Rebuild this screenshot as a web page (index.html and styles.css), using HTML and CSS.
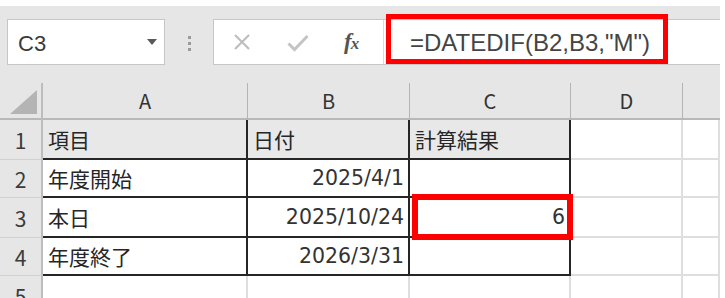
FILE: index.html
```html
<!DOCTYPE html>
<html lang="ja">
<head>
    <meta charset="UTF-8">
    <meta name="viewport" content="width=device-width, initial-scale=1.0">
    <title>DATEDIF</title>
    <link rel="stylesheet" href="styles.css">
</head>
<body>
    <div class="excel">
        <div class="toolbar">
            <div class="namebox">
                <span class="name">C3</span>
                <svg class="arrow" width="10" height="6" viewBox="0 0 10 6"><path d="M0 0H10L5 6Z" fill="#595959"/></svg>
            </div>
            <div class="grip">
                <span></span><span></span><span></span>
            </div>
            <div class="formula">
                <div class="fbtns">
                    <svg class="ico-x" width="18" height="16" viewBox="0 0 18 16"><path d="M2 1L16 15M16 1L2 15" stroke="#bcbcbc" stroke-width="2"/></svg>
                    <svg class="ico-ok" width="22" height="18" viewBox="0 0 22 18"><path d="M1.5 9.5L7.5 15.5L20.5 2" fill="none" stroke="#c4c4c4" stroke-width="3"/></svg>
                    <span class="ico-fx">f<small>x</small></span>
                </div>
                <div class="finput">
                    <span class="ftext">=DATEDIF(B2,B3,"M")</span>
                    <span class="mark mark-formula"></span>
                </div>
            </div>
        </div>

        <div class="sheet">
            <div class="corner">
                <svg width="27" height="24" viewBox="0 0 27 24"><path d="M27 0V24H0Z" fill="#b4b4b4"/></svg>
            </div>
            <div class="colhead">A</div>
            <div class="colhead">B</div>
            <div class="colhead">C</div>
            <div class="colhead">D</div>
            <div class="colhead last"></div>

            <div class="rowhead">1</div>
            <div class="cell tbl head">項目</div>
            <div class="cell tbl head">日付</div>
            <div class="cell tbl head">計算結果</div>
            <div class="cell"></div>
            <div class="cell"></div>

            <div class="rowhead">2</div>
            <div class="cell tbl">年度開始</div>
            <div class="cell tbl num">2025/4/1</div>
            <div class="cell tbl"></div>
            <div class="cell"></div>
            <div class="cell"></div>

            <div class="rowhead">3</div>
            <div class="cell tbl">本日</div>
            <div class="cell tbl num">2025/10/24</div>
            <div class="cell tbl num result">6<span class="mark mark-cell"></span></div>
            <div class="cell"></div>
            <div class="cell"></div>

            <div class="rowhead">4</div>
            <div class="cell tbl">年度終了</div>
            <div class="cell tbl num">2026/3/31</div>
            <div class="cell tbl"></div>
            <div class="cell"></div>
            <div class="cell"></div>

            <div class="rowhead">5</div>
            <div class="cell"></div>
            <div class="cell"></div>
            <div class="cell"></div>
            <div class="cell"></div>
            <div class="cell"></div>
        </div>
    </div>
</body>
</html>
```

FILE: styles.css
```css
body {
    margin: 0;
    background-color: #ffffff;
    overflow: hidden;
    font-family: "Noto Sans CJK JP", "Liberation Sans", sans-serif;
    color: #262626;
}

.excel {
    margin: 6px 5px 0 0;
    height: 292px;
    overflow: hidden;
}

/* formula bar */

.toolbar {
    height: 77px;
    box-sizing: border-box;
    padding: 13px 0 0 7px;
    background-color: #e6e6e6;
    display: flex;
    align-items: flex-start;
}

.namebox {
    width: 158px;
    height: 46px;
    box-sizing: border-box;
    background-color: #ffffff;
    border: 1px solid #c6c6c6;
    display: flex;
    align-items: center;
    justify-content: space-between;
    padding: 0 7px 0 10px;
}

.name {
    font-family: "Liberation Sans", sans-serif;
    font-size: 22px;
    color: #3a3a3a;
    padding-top: 3px;
}

.grip {
    width: 48px;
    height: 46px;
    display: flex;
    flex-direction: column;
    align-items: center;
    justify-content: center;
    gap: 3px;
    padding-top: 2px;
    box-sizing: border-box;
}

.grip span {
    width: 3px;
    height: 3px;
    background-color: #9a9a9a;
}

.formula {
    flex: 1;
    height: 46px;
    box-sizing: border-box;
    background-color: #ffffff;
    border: 1px solid #c6c6c6;
    border-right: none;
    display: flex;
}

.fbtns {
    width: 169px;
    display: flex;
    align-items: center;
    border-right: 1px solid #dadada;
}

.ico-x {
    margin-left: 19px;
}

.ico-ok {
    margin-left: 36px;
    margin-top: 2px;
}

.ico-fx {
    margin-left: 35px;
    font-family: "Liberation Serif", serif;
    font-style: italic;
    font-weight: bold;
    font-size: 23px;
    color: #555555;
    letter-spacing: -1px;
}

.ico-fx small {
    font-size: 17px;
}

.finput {
    flex: 1;
    position: relative;
    display: flex;
    align-items: center;
    padding-left: 26px;
}

.ftext {
    font-family: "Liberation Sans", sans-serif;
    font-size: 24px;
    color: #444444;
    padding-top: 2px;
}

.mark {
    position: absolute;
    box-sizing: border-box;
    border: 6px solid #ff0000;
}

.mark-formula {
    left: 2px;
    top: -6px;
    width: 282px;
    height: 50px;
    border-width: 5px;
}

/* sheet */

.sheet {
    display: grid;
    grid-template-columns: 43px 205px 162px 161px 112px 1fr;
    grid-template-rows: 37px 40px 38px 40px 38px 40px;
}

.corner {
    background-color: #e6e6e6;
    border-right: 2px solid #bdbdbd;
    border-bottom: 2px solid #b8b8b8;
    display: flex;
    align-items: flex-end;
    justify-content: flex-end;
    padding: 0 4px 4px 0;
}

.colhead {
    background-color: #e6e6e6;
    border-right: 1px solid #b4b4b4;
    border-bottom: 2px solid #b8b8b8;
    display: flex;
    align-items: center;
    justify-content: center;
    font-size: 20px;
    color: #333333;
}

.colhead.last {
    border-right: none;
}

.rowhead {
    background-color: #e6e6e6;
    border-right: 2px solid #bdbdbd;
    border-bottom: 1px solid #d0d0d0;
    display: flex;
    align-items: center;
    justify-content: center;
    font-size: 21px;
    color: #3a3a3a;
}

.cell {
    border-right: 2px solid #dedede;
    border-bottom: 2px solid #dedede;
    display: flex;
    align-items: center;
    padding: 0 4px 0 5px;
    font-size: 21px;
    white-space: nowrap;
}

.cell.tbl {
    border-right-color: #262626;
    border-bottom-color: #262626;
}

.cell.head {
    background-color: #e8e8e8;
}

.cell.num {
    justify-content: flex-end;
    font-family: "DejaVu Sans", sans-serif;
    font-size: 20.5px;
    color: #333333;
}

.result {
    position: relative;
}

.mark-cell {
    left: 2px;
    right: -4px;
    top: -4px;
    bottom: -4px;
}
```
